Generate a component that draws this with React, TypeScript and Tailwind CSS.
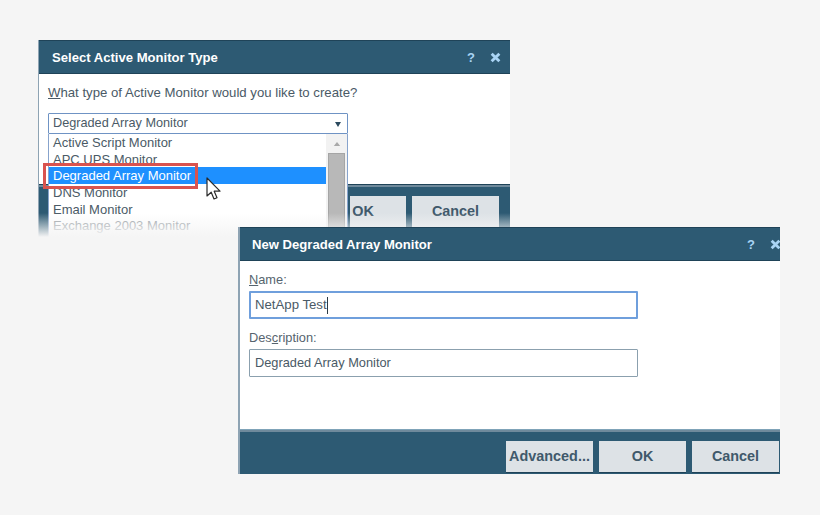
import React from 'react';

const monitors = [
  'Active Script Monitor',
  'APC UPS Monitor',
  'Degraded Array Monitor',
  'DNS Monitor',
  'Email Monitor',
  'Exchange 2003 Monitor',
];

function TitleBar({ title, clipped }: { title: string; clipped?: boolean }) {
  return (
    <div className={`flex h-[34px] shrink-0 items-center border-y border-[#1f4358] bg-[#2d5a73] pt-px ${clipped ? 'pl-[12px]' : 'pl-[13px] pr-[9px]'}`}>
      <span className="flex-1 text-[13.1px] font-bold text-white">{title}</span>
      <span className="mr-[15px] text-[13px] font-bold text-[#a9d4f5]">?</span>
      <svg viewBox="0 0 10 10" className={`h-[11px] w-[11px] shrink-0 ${clipped ? '-mr-[1px]' : ''}`}>
        <path d="M1.5 1.5 L8.5 8.5 M8.5 1.5 L1.5 8.5" stroke="#a9d4f5" strokeWidth="2.6" />
      </svg>
    </div>
  );
}

function FooterButton({ label, className }: { label: string; className?: string }) {
  return (
    <div className={`flex h-[32px] items-center justify-center border-b border-[#1f4358] bg-[#dde2e6] text-[14.4px] font-bold text-[#40596b] ${className ?? ''}`}>
      {label}
    </div>
  );
}

function MonitorDropdown() {
  return (
    <div className="absolute left-[9px] top-[94px] z-10 flex h-[103px] w-[300px] border-x border-[#87a3cc] bg-white">
      <ul className="flex-1">
        {monitors.map((name, i) => (
          <li
            key={name}
            className={`flex h-[16.6px] items-center pl-[4px] pt-px text-[13px] leading-none ${i === 2 ? 'bg-[#1e90ff] text-white' : i === 5 ? 'text-[#8f979d]' : 'text-[#4a5a66]'}`}
          >
            {name}
          </li>
        ))}
      </ul>
      <div className="flex w-[21px] flex-col items-center bg-[#f2f2f2] pt-[8px]">
        <svg viewBox="0 0 8 5" className="h-[5px] w-[8px]">
          <path d="M4 0 L8 5 L0 5 Z" fill="#a9a9a9" />
        </svg>
        <div className="mt-[7px] h-full w-[17px] border border-[#a5a5a5] bg-[#b8b8b8]" />
      </div>
    </div>
  );
}

function SelectDialog() {
  return (
    <div className="absolute left-[38px] top-[40px] flex h-[197px] w-[472px] flex-col border-l border-[#8ea3b3] bg-white">
      <TitleBar title="Select Active Monitor Type" />
      <div className="relative h-[110px] shrink-0 pl-[9px] pt-[10px]">
        <p className="text-[13.2px] leading-[17px] text-[#4a5a66]">
          <span className="underline">W</span>hat type of Active Monitor would you like to create?
        </p>
        <div className="mt-[12px] flex h-[21px] w-[300px] items-center justify-between rounded-[1px] border border-[#6f93c4] pl-[4px] pr-[6px] pt-px text-[12.7px] text-[#4a5a66]">
          <span>Degraded Array Monitor</span>
          <svg viewBox="0 0 6 5" className="h-[5px] w-[6px]">
            <path d="M0 0 H6 L3 5 Z" fill="#2b4a5e" />
          </svg>
        </div>
      </div>
      <div className="flex flex-1 items-start justify-end gap-[6px] border-t border-[#1f4358] bg-[#2d5a73] pr-[11px] pt-[11px] shadow-[inset_0_2px_0_#6f8a9c]">
        <FooterButton label="OK" className="w-[56px] pr-[30px]" />
        <FooterButton label="Cancel" className="w-[87px]" />
      </div>
      <MonitorDropdown />
      <div className="pointer-events-none absolute inset-x-[-1px] bottom-0 z-20 h-[24px] bg-gradient-to-b from-transparent to-[#f5f5f5]" />
    </div>
  );
}

function Callout() {
  return (
    <>
      <div className="absolute left-[43px] top-[163px] z-30 h-[26px] w-[155px] border-[3px] border-[#d9534f]" />
      <svg viewBox="0 0 16 24" className="absolute left-[206px] top-[177px] z-30 h-[24px] w-[16px]">
        <path d="M1 1 V19 L5.2 15.2 L8 22 L11 20.8 L8.2 14.2 H14 Z" fill="#fff" stroke="#2b2b2b" strokeWidth="1.2" strokeLinejoin="round" />
      </svg>
    </>
  );
}

function Field({ label, value, focused }: { label: React.ReactNode; value: string; focused?: boolean }) {
  return (
    <div>
      <div className="text-[12.8px] leading-[17px] text-[#56646e]">{label}</div>
      <div className={`mt-[3px] flex h-[28px] w-[389px] items-center rounded-[1px] bg-white text-[#4a5a66] ${focused ? 'border-2 border-[#6f9fdc] pl-[4px] text-[13.2px]' : 'border border-[#8ba0ae] pl-[5px] text-[12.8px]'}`}>
        {value}
        {focused && <span className="h-[17px] w-px bg-[#2b3a44]" />}
      </div>
    </div>
  );
}

function NewMonitorDialog() {
  return (
    <div className="absolute left-[238px] top-[227px] z-40 flex h-[247px] w-[542px] flex-col overflow-hidden border-l-2 border-[#8ea3b3] bg-white">
      <TitleBar title="New Degraded Array Monitor" clipped />
      <div className="flex h-[168px] shrink-0 flex-col gap-[10px] pl-[9px] pt-[10px]">
        <Field
          label={<><span className="underline">N</span>ame:</>}
          value="NetApp Test"
          focused
        />
        <Field
          label={<>Des<span className="underline">c</span>ription:</>}
          value="Degraded Array Monitor"
        />
      </div>
      <div className="flex flex-1 items-start justify-end gap-[6px] border-t border-[#7fa3b8] bg-[#2d5a73] pr-px pt-[11px] shadow-[inset_0_2px_0_#6f8a9c]">
        <FooterButton label="Advanced..." className="w-[87px]" />
        <FooterButton label="OK" className="w-[87px]" />
        <FooterButton label="Cancel" className="w-[87px]" />
      </div>
    </div>
  );
}

export default function App() {
  return (
    <div className="relative h-[515px] w-[820px] overflow-hidden bg-[#f5f5f5] font-['Liberation_Sans',Arial,sans-serif]">
      <SelectDialog />
      <Callout />
      <NewMonitorDialog />
    </div>
  );
}
